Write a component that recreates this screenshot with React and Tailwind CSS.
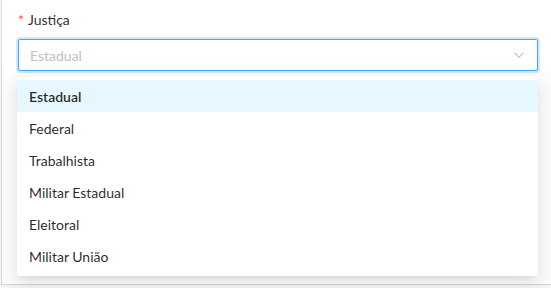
import React from "react";

const opcoes = ["Estadual", "Federal", "Trabalhista", "Militar Estadual", "Eleitoral", "Militar União"];

function Chevron() {
  return (
    <svg width="12" height="12" viewBox="0 0 12 12" fill="none">
      <path d="M1.5 3.8 L6 8.3 L10.5 3.8" stroke="#bfbfbf" strokeWidth="1.1" />
    </svg>
  );
}

export default function App() {
  const selecionado = "Estadual";

  return (
    <div
      className="w-[551px] h-[288px] bg-[#f7f7f7] overflow-hidden text-[14px] text-[rgba(0,0,0,0.85)]"
      style={{ fontFamily: "Lato, 'Segoe UI', 'Noto Sans', sans-serif" }}
    >
      <div className="ml-px h-[285px] bg-white border-l border-b border-[#d9d9d9] pl-4 pr-[12px] pt-[9px]">
        {/* Campo Justiça */}
        <div className="relative">
          <label className="flex items-center h-[22px] leading-[22px] mb-2">
            <span className="text-[#ff4d4f] mr-[4px] text-[14px] leading-none">*</span>
            Justiça
          </label>

          <div className="flex items-center h-[32px] w-[520px] px-[11px] border border-[#40a9ff] rounded-[2px] bg-white shadow-[0_0_0_2px_rgba(24,144,255,0.2)]">
            <span className="flex-1 text-[#bfbfbf]">Estadual</span>
            <span className="mr-[1px]">
              <Chevron />
            </span>
          </div>

          {/* menu aberto */}
          <div className="absolute left-[-1px] top-[67px] w-[521px] bg-white rounded-[2px] py-1 shadow-[0_3px_6px_-4px_rgba(0,0,0,0.12),0_6px_16px_0_rgba(0,0,0,0.08),0_9px_28px_8px_rgba(0,0,0,0.05)]">
            {opcoes.map((o) => (
              <div
                key={o}
                className={
                  o === selecionado
                    ? "h-[32px] flex items-center px-3 bg-[#e6f7ff] font-semibold"
                    : "h-[32px] flex items-center px-3"
                }
              >
                {o}
              </div>
            ))}
          </div>
        </div>
      </div>
    </div>
  );
}
